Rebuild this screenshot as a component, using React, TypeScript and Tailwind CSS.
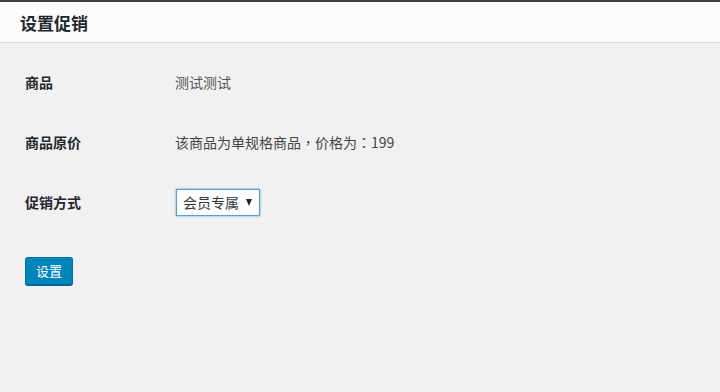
import React from "react";

export default function App() {
  const font = { fontFamily: '"Noto Sans CJK SC", "Noto Sans", sans-serif' };
  const tc = { fontFamily: '"Noto Sans CJK TC", sans-serif' };
  return (
    <div className="w-[720px] h-[392px] bg-[#f1f1f1] overflow-hidden [text-spacing-trim:space-all]" style={font}>
      <div className="h-[2px] bg-[#3f3f3f]" />
      <div className="h-[41px] bg-[#fcfcfc] border-b border-[#dddddd] flex items-center pl-[20px]">
        <h1 className="text-[17px] font-bold text-[#23282d] leading-none">设置促销</h1>
      </div>
      <div className="pl-[25px] pt-[9px]">
        <div className="h-[60px] flex items-center">
          <div className="w-[150px] text-[14px] font-bold text-[#23282d]">商品</div>
          <div className="text-[14px] text-[#555555]">测试测试</div>
        </div>
        <div className="h-[60px] flex items-center">
          <div className="w-[150px] text-[14px] font-bold text-[#23282d]">商品原价</div>
          <div className="text-[14px] text-[#444444]">
            该商品为单规格商品<span style={tc}>，</span>价格为<span style={tc}>：</span>199
          </div>
        </div>
        <div className="h-[60px] flex items-center">
          <div className="w-[151px] text-[14px] font-bold text-[#23282d]">促销方式</div>
          <div className="w-[84px] h-[27px] bg-white border border-[#5b9dd9] shadow-[0_0_2px_rgba(30,140,190,0.8)] flex items-center justify-between pl-[6px] pr-[7px]">
            <span className="text-[14px] text-[#32373c]">会员专属</span>
            <span className="w-0 h-0 border-l-[3.5px] border-r-[3.5px] border-t-[7px] border-l-transparent border-r-transparent border-t-[#222222]" />
          </div>
        </div>
        <div className="mt-[25px]">
          <button className="w-[48px] h-[28px] bg-[#0085ba] border border-[#0073aa] border-b-[#006799] rounded-[3px] text-white text-[13px] flex items-center justify-center shadow-[0_1px_0_#006799]">
            设置
          </button>
        </div>
      </div>
    </div>
  );
}
